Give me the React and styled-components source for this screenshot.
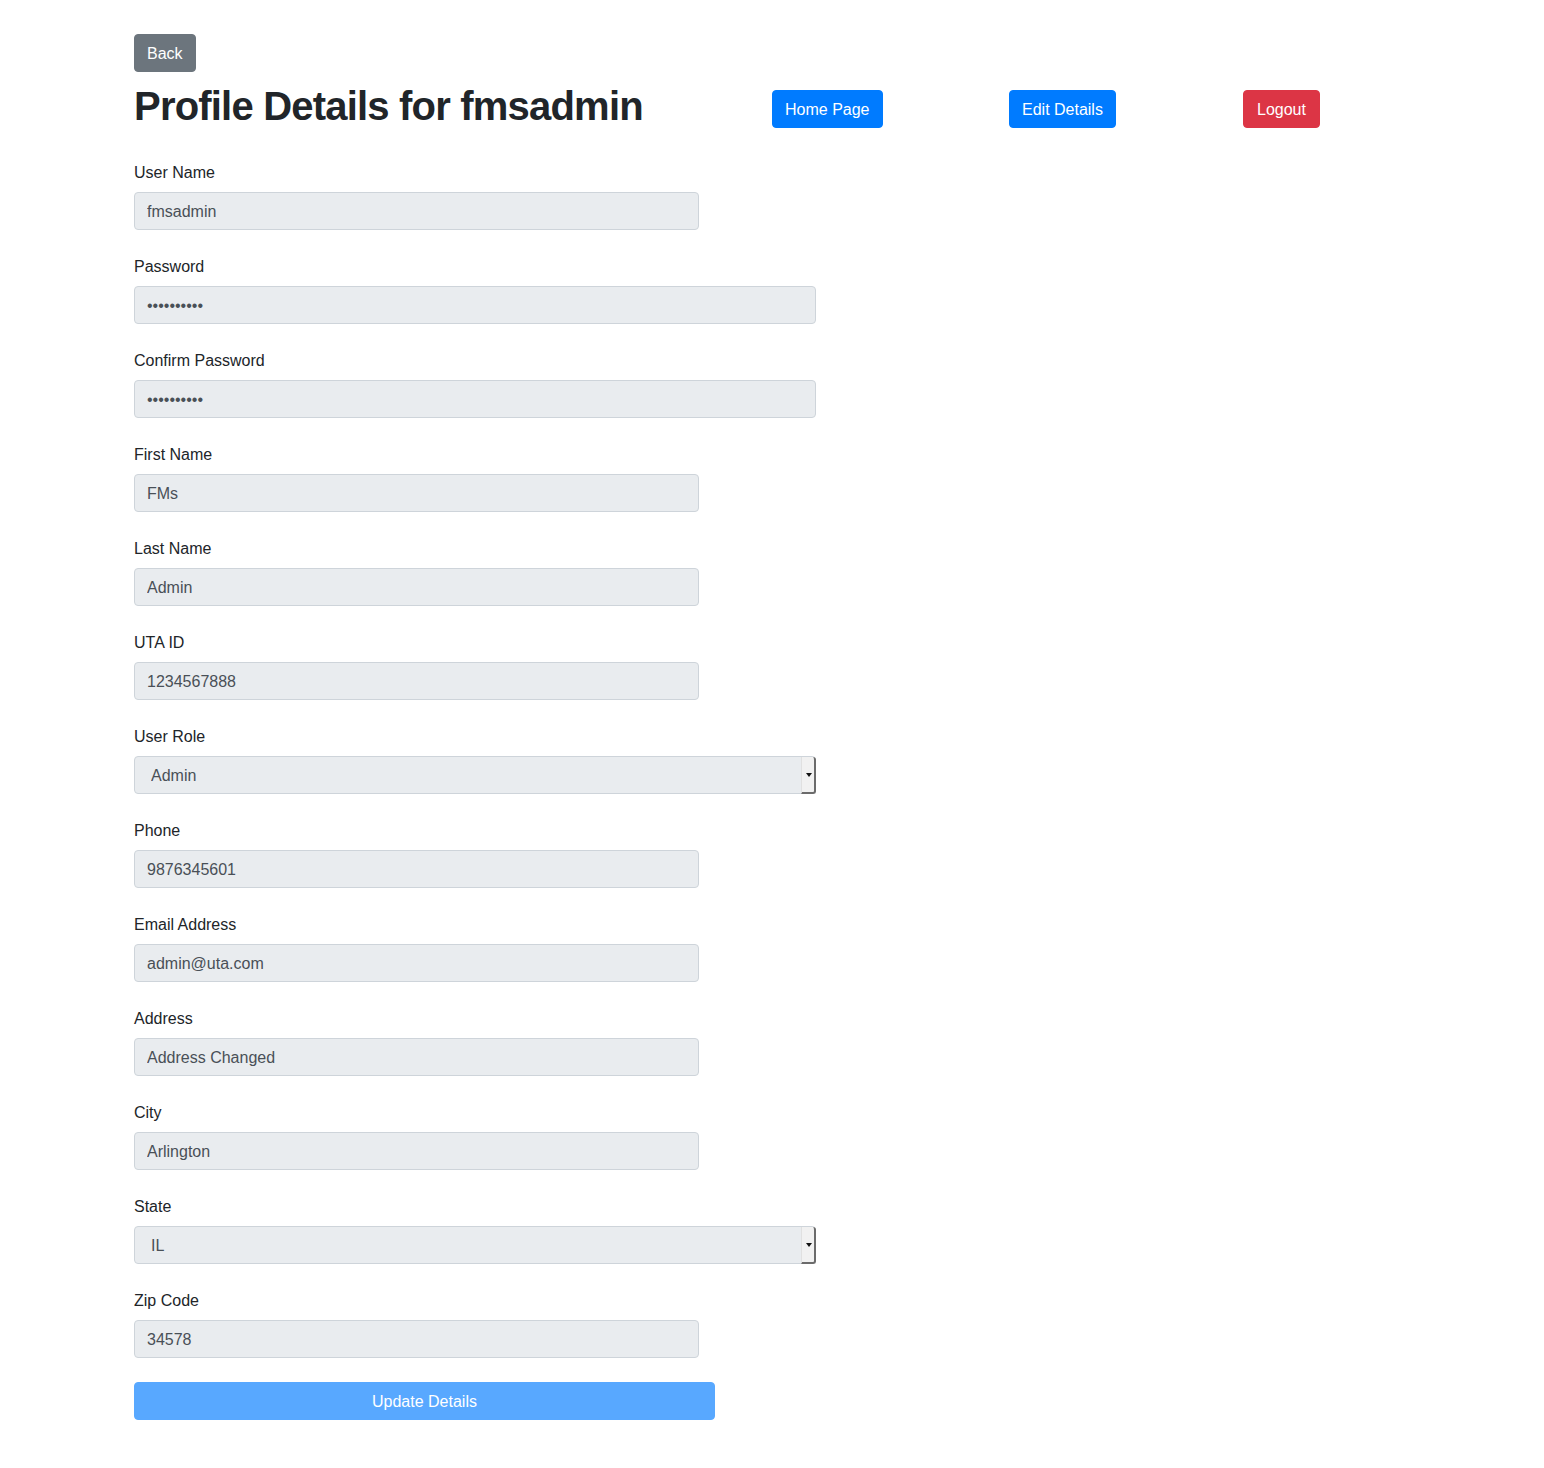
import React, { useState } from 'react';
import styled, { createGlobalStyle } from 'styled-components';

const GlobalStyle = createGlobalStyle`
	* {
		box-sizing: border-box;
	}

	body {
		margin: 0;
		background: #fff;
		color: #212529;
		font-family: "Liberation Sans", Arial, sans-serif;
		font-size: 16px;
		line-height: 1.5;
	}
`;

const Page = styled.div`
	padding: 34px 0 48px 134px;
	min-height: 1468px;
`;

const Button = styled.button`
	display: inline-block;
	height: 38px;
	padding: 6px ${props => props.$px || 12}px;
	border: 1px solid ${props => props.$bg};
	border-radius: 4px;
	background-color: ${props => props.$bg};
	color: #fff;
	font-family: inherit;
	font-size: 16px;
	line-height: 25px;
	cursor: pointer;
	opacity: ${props => (props.disabled ? 0.65 : 1)};
`;

const HeaderRow = styled.div`
	display: grid;
	grid-template-columns: 638px 237px 234px auto;
	align-items: start;
	margin-top: 10px;

	h1 {
		margin: 0;
		padding-top: 1px;
		font-size: 40px;
		font-weight: 700;
		line-height: 47px;
		letter-spacing: -0.8px;
		color: #212529;
	}

	${Button} {
		justify-self: start;
		margin-top: 8px;
	}
`;

const Form = styled.form`
	margin-top: 30px;
	display: flex;
	flex-direction: column;
`;

const FormGroup = styled.div`
	display: flex;
	flex-direction: column;
	margin-bottom: 24px;

	label {
		margin-bottom: 8px;
		padding-top: 1px;
		font-size: 16px;
		line-height: 23px;
		color: #212529;
	}
`;

const Input = styled.input`
	width: ${props => (props.$wide ? '682px' : '565px')};
	height: 38px;
	padding: 7px 12px 5px;
	border: 1px solid #ced4da;
	border-radius: 4px;
	background-color: #e9ecef;
	color: #495057;
	font-family: inherit;
	font-size: 16px;
	line-height: 24px;
	outline: none;
`;

const SelectWrap = styled.div`
	position: relative;
	width: 682px;
	height: 38px;
`;

const Select = styled.select`
	width: 100%;
	height: 38px;
	padding: 7px 12px 5px 16px;
	border: 1px solid #ced4da;
	border-radius: 4px;
	background-color: #e9ecef;
	color: #495057;
	font-family: inherit;
	font-size: 16px;
	line-height: 24px;
	appearance: none;
	-webkit-appearance: none;
	outline: none;
`;

// native-looking dropdown arrow box over the right edge of the select
const SelectArrow = styled.span`
	position: absolute;
	top: 1px;
	right: 0;
	width: 15px;
	height: 37px;
	background: #f1f1f1;
	border-right: 2px solid #6b6b6b;
	border-bottom: 2px solid #6b6b6b;
	border-left: 1px solid #e0e0e0;
	border-radius: 0 3px 3px 0;
	pointer-events: none;

	&::after {
		content: '';
		position: absolute;
		top: 16px;
		left: 4px;
		border-left: 3px solid transparent;
		border-right: 3px solid transparent;
		border-top: 4px solid #111;
	}
`;

const SubmitButton = styled(Button)`
	width: 581px;
	margin-top: 0;
`;

const fields = [
	{ name: 'userName', label: 'User Name', value: 'fmsadmin' },
	{ name: 'password', label: 'Password', value: '••••••••••', wide: true },
	{ name: 'confirm', label: 'Confirm Password', value: '••••••••••', wide: true },
	{ name: 'firstName', label: 'First Name', value: 'FMs' },
	{ name: 'lastName', label: 'Last Name', value: 'Admin' },
	{ name: 'utaId', label: 'UTA ID', value: '1234567888' },
	{ name: 'role', label: 'User Role', value: 'Admin', select: ['Admin', 'User', 'Manager'] },
	{ name: 'phone', label: 'Phone', value: '9876345601' },
	{ name: 'email', label: 'Email Address', value: 'admin@uta.com' },
	{ name: 'address', label: 'Address', value: 'Address Changed' },
	{ name: 'city', label: 'City', value: 'Arlington' },
	{ name: 'state', label: 'State', value: 'IL', select: ['IL', 'TX', 'CA', 'NY'] },
	{ name: 'zip', label: 'Zip Code', value: '34578' },
];

const App = () => {
	const [values, setValues] = useState(
		fields.reduce((acc, f) => ({ ...acc, [f.name]: f.value }), {})
	);

	const updateField = (e) => {
		setValues({ ...values, [e.target.name]: e.target.value });
	};

	return (
		<>
			<GlobalStyle />
			<Page>
				<Button $bg='#6c757d'>Back</Button>
				<HeaderRow>
					<h1>Profile Details for fmsadmin</h1>
					<Button $bg='#007bff'>Home Page</Button>
					<Button $bg='#007bff'>Edit Details</Button>
					<Button $bg='#dc3545' $px={13}>Logout</Button>
				</HeaderRow>
				<Form onSubmit={e => e.preventDefault()}>
					{fields.map(f => (
						<FormGroup key={f.name}>
							<label htmlFor={f.name}>{f.label}</label>
							{f.select ? (
								<SelectWrap>
									<Select id={f.name} name={f.name} value={values[f.name]} onChange={updateField}>
										{f.select.map(opt => <option key={opt}>{opt}</option>)}
									</Select>
									<SelectArrow />
								</SelectWrap>
							) : (
								<Input id={f.name} name={f.name} $wide={f.wide} value={values[f.name]} readOnly />
							)}
						</FormGroup>
					))}
					<SubmitButton $bg='#007bff' disabled>Update Details</SubmitButton>
				</Form>
			</Page>
		</>
	);
};

export default App;
